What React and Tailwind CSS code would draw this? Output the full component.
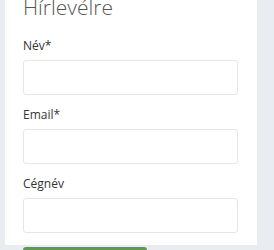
export default function App() {
  return (
    <div className="w-[274px] h-[250px] overflow-hidden bg-[#e9ecf0] pl-[5px] pr-[17px]">
      <div className="h-full bg-white pl-[18px] pr-[19px] font-['Open_Sans',sans-serif]">
        <h2 className="-mt-[5px] text-[21px] leading-[24px] font-light text-[#555]">Hírlevélre</h2>
        <div className="mt-[18px]">
          {['Név*', 'Email*', 'Cégnév'].map((l) => (
            <div key={l} className="mb-[11px]">
              <label className="block text-[12px] leading-[18px] text-[#333]">{l}</label>
              <input className="mt-[5px] block w-full h-[35px] border border-[#e6e6e6] rounded-[3px] bg-white outline-none" />
            </div>
          ))}
        </div>
        <button className="mt-[3px] w-[124px] h-[36px] bg-[#5b9b53] rounded-[3px] text-white text-[13px]">Feliratkozom</button>
      </div>
    </div>
  );
}
